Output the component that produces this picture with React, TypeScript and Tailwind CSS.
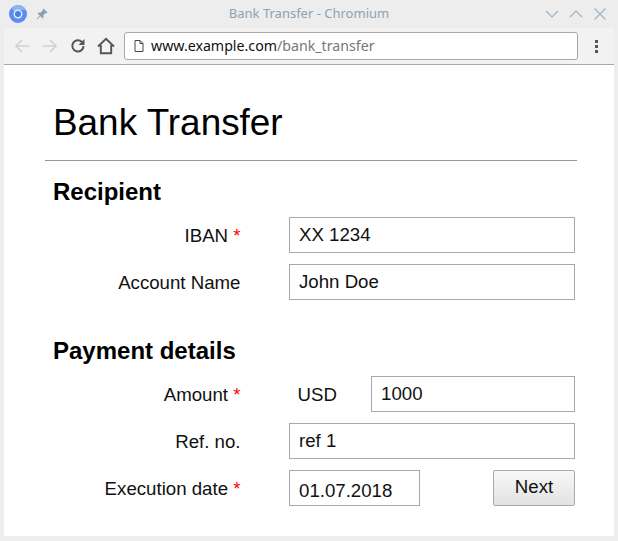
import React from 'react';

const inputClass =
  'h-[36px] border border-[#a9a9a9] bg-white pl-[9px] text-[18.67px] text-[#111] outline-none';

const FormRow: React.FC<{ label: string; required?: boolean; children: React.ReactNode }> = ({
  label,
  required,
  children,
}) => (
  <div className="flex h-[36px] items-center">
    <label className="w-[195.5px] pt-[1px] text-right text-[18.67px] text-[#111]">
      {label}
      {required && <span className="text-[#f00]"> *</span>}
    </label>
    <div className="ml-[48.5px] flex w-[286px] items-center">{children}</div>
  </div>
);

const ChromiumLogo = () => (
  <svg width="18" height="18" viewBox="0 0 18 18">
    <circle cx="9" cy="9" r="9" fill="#5b8df0" />
    <path d="M9 0a9 9 0 0 1 8 5H9a4 4 0 0 0-4 2L3 3a9 9 0 0 1 6-3z" fill="#8fb4f5" />
    <circle cx="9" cy="9" r="4.5" fill="#dfe9fb" />
    <circle cx="9" cy="9" r="3" fill="#4a7fe6" />
  </svg>
);

const PinIcon = () => (
  <svg width="14" height="14" viewBox="0 0 14 14" fill="#8ba0b0">
    <path d="M8.5 1.5l4 4-1 .8-.8-.3-2.4 2.6.2 2-.9.9-2.2-2.3L2 12.5l-.5-.5 3.3-3.4L2.5 6.4l.9-.9 2 .2L8 3.3l-.3-.8z" />
  </svg>
);

const WindowIcon: React.FC<{ d: string }> = ({ d }) => (
  <svg width="14" height="14" viewBox="0 0 14 14" fill="none" stroke="#9db2c2" strokeWidth="1.1">
    <path d={d} />
  </svg>
);

const NavArrow: React.FC<{ d: string }> = ({ d }) => (
  <svg width="16" height="16" viewBox="0 0 16 16" fill="none" stroke="#d0d0d0" strokeWidth="1.6">
    <path d={d} />
  </svg>
);

const App: React.FC = () => {
  return (
    <div className="flex h-[541px] w-[618px] flex-col overflow-hidden bg-[#ededed] font-['Liberation_Sans',sans-serif]">
      {/* Title bar */}
      <div className="flex h-[28px] shrink-0 items-center pl-[9px] pr-[11px]">
        <ChromiumLogo />
        <span className="ml-[8px]">
          <PinIcon />
        </span>
        <div className="flex-1 pl-[24px] text-center font-['Noto_Sans',sans-serif] text-[13px] text-[#8ba3b5]">
          Bank Transfer - Chromium
        </div>
        <div className="flex gap-[10px]">
          <WindowIcon d="M1 4l6 6 6-6" />
          <WindowIcon d="M1 10l6-6 6 6" />
          <WindowIcon d="M1.5 1.5l11 11M12.5 1.5l-11 11" />
        </div>
      </div>

      {/* Toolbar */}
      <div className="mx-[4px] flex h-[37px] shrink-0 items-center border-b border-[#a8a8a8] bg-[#f2f2f2] pl-[10px]">
        <NavArrow d="M15 8H2M8 2L2 8l6 6" />
        <span className="ml-[12px]">
          <NavArrow d="M1 8h13M8 2l6 6-6 6" />
        </span>
        <svg width="16" height="16" viewBox="0 0 16 16" fill="none" className="ml-[12px]">
          <path d="M13.5 8a5.6 5.6 0 1 1-1.6-4" stroke="#555" strokeWidth="2" />
          <path d="M14.5 1v6h-6z" fill="#555" />
        </svg>
        <svg width="18" height="18" viewBox="0 0 18 18" fill="none" className="ml-[11px]">
          <path d="M1 9.5L9 1.8l8 7.7M3.8 8v8.2h10.4V8" stroke="#555" strokeWidth="1.9" />
        </svg>
        <div className="ml-[9px] flex h-[28px] w-[454px] items-center rounded-[3px] border border-[#a9a9a9] bg-white pl-[9px] font-['Noto_Sans',sans-serif] text-[14.2px]">
          <svg width="10" height="12" viewBox="0 0 10 12" fill="none" stroke="#444" strokeWidth="1">
            <path d="M1 .5h5l3 3v8H1zM6 .5v3h3" />
          </svg>
          <span className="ml-[7px] text-[#111]">www.example.com</span>
          <span className="text-[#777]">/bank_transfer</span>
        </div>
        <div className="ml-[17px] flex flex-col gap-[2px]">
          <span className="h-[3px] w-[3px] bg-[#555]" />
          <span className="h-[3px] w-[3px] bg-[#555]" />
          <span className="h-[3px] w-[3px] bg-[#555]" />
        </div>
      </div>

      {/* Page */}
      <div className="mx-[4px] mb-[5px] flex-1 bg-white pl-[41px] pr-[37px] text-[#111]">
        <h1 className="mt-[34px] h-[48px] pl-[8px] text-[36.9px] leading-[48px] text-black">Bank Transfer</h1>
        <div className="mt-[13px] h-px bg-[#999]" />
        <h2 className="mt-[17px] h-[27px] pl-[8px] text-[24px] leading-[27px] font-bold text-black">Recipient</h2>

        <div className="mt-[12px] flex flex-col gap-[11px]">
          <FormRow label="IBAN" required>
            <input className={`${inputClass} w-[286px]`} defaultValue="XX 1234" />
          </FormRow>
          <FormRow label="Account Name">
            <input className={`${inputClass} w-[286px]`} defaultValue="John Doe" />
          </FormRow>
        </div>

        <h2 className="mt-[37px] h-[27px] pl-[8px] text-[24px] leading-[27px] font-bold text-black">Payment details</h2>

        <div className="mt-[12px] flex flex-col gap-[11px]">
          <FormRow label="Amount" required>
            <span className="w-[82px] pl-[8.5px] pt-[1px] text-[18.67px]">USD</span>
            <input className={`${inputClass} w-[204px]`} defaultValue="1000" />
          </FormRow>
          <FormRow label="Ref. no.">
            <input className={`${inputClass} w-[286px]`} defaultValue="ref 1" />
          </FormRow>
          <FormRow label="Execution date" required>
            <input className={`${inputClass} w-[131px] pt-[5px]`} defaultValue="01.07.2018" />
            <button className="ml-auto h-[36px] w-[82px] rounded-[2px] border border-[#a9a9a9] bg-gradient-to-b from-[#f8f8f8] to-[#e2e2e2] pb-[2px] text-[18.67px] text-[#111]">
              Next
            </button>
          </FormRow>
        </div>
      </div>
    </div>
  );
};

export default App;
